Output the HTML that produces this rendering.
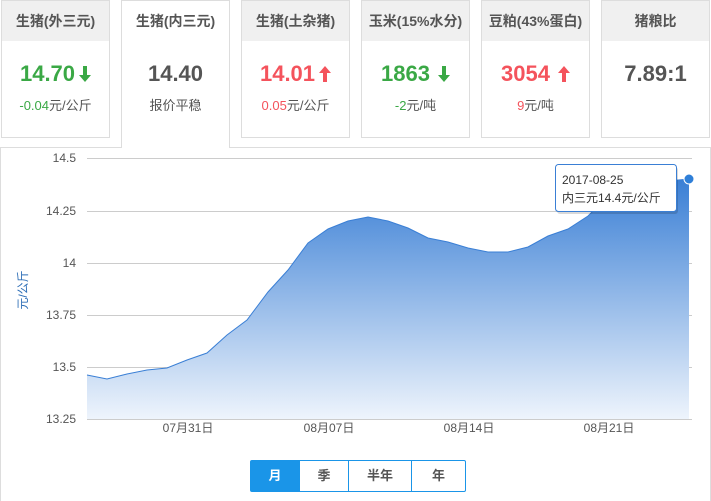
<!DOCTYPE html>
<html><head><meta charset="utf-8"><style>
body{margin:0;width:711px;height:501px;background:#fff;font-family:"Liberation Sans","Noto Sans CJK SC",sans-serif;position:relative;overflow:hidden}
.c{position:absolute;top:0;width:107px;height:136px;border:1px solid #ddd;background:#fff;text-align:center}
.c .h{height:40px;background:#f0f0f0;line-height:40px;font-size:14px;font-weight:bold;color:#555}
.c .v{margin-top:18px;font-size:22px;font-weight:bold;line-height:30px}
.c .s{font-size:13px;color:#555;margin-top:6px}
.g{color:#3aa845}.r{color:#f4535c}.k{color:#555}
.sel{height:147px;border-bottom:none;z-index:2}
.sel .h{background:#fff}
.panel{position:absolute;left:0;top:147px;width:709px;height:353px;border:1px solid #ddd;border-bottom:none}
.btns{position:absolute;left:250px;top:460px;height:30px;border:1px solid #1a95e8;display:flex;font-size:13px;font-weight:bold;color:#555;border-radius:2px}
.btns div{line-height:30px;text-align:center;border-left:1px solid #1a95e8}
.btns div:first-child{border-left:none;background:#1a95e8;color:#fff}
svg.a{vertical-align:-1px;margin-left:4px}
</style></head><body>
<div class="panel"></div>
<div class="c" style="left:1px"><div class="h">生猪(外三元)</div><div class="v g">14.70<svg class="a" width="12" height="16" viewBox="0 0 12 16"><path d="M4 0H8V9H12L6 16L0 9H4Z" fill="#3aa845"/></svg></div><div class="s"><span class="g">-0.04</span>元/公斤</div></div>
<div class="c sel" style="left:121px"><div class="h">生猪(内三元)</div><div class="v k">14.40</div><div class="s">报价平稳</div></div>
<div class="c" style="left:241px"><div class="h">生猪(土杂猪)</div><div class="v r">14.01<svg class="a" width="12" height="16" viewBox="0 0 12 16"><path d="M4 16H8V7H12L6 0L0 7H4Z" fill="#f4535c"/></svg></div><div class="s"><span class="r">0.05</span>元/公斤</div></div>
<div class="c" style="left:361px"><div class="h">玉米(15%水分)</div><div class="v g">1863<svg class="a" style="margin-left:8px" width="12" height="16" viewBox="0 0 12 16"><path d="M4 0H8V9H12L6 16L0 9H4Z" fill="#3aa845"/></svg></div><div class="s"><span class="g">-2</span>元/吨</div></div>
<div class="c" style="left:481px"><div class="h">豆粕(43%蛋白)</div><div class="v r">3054<svg class="a" style="margin-left:8px" width="12" height="16" viewBox="0 0 12 16"><path d="M4 16H8V7H12L6 0L0 7H4Z" fill="#f4535c"/></svg></div><div class="s"><span class="r">9</span>元/吨</div></div>
<div class="c" style="left:601px"><div class="h">猪粮比</div><div class="v k">7.89:1</div></div>
<svg style="position:absolute;left:0;top:0" width="711" height="501">
<defs><linearGradient id="gr" x1="0" y1="0" x2="0" y2="1"><stop offset="0" stop-color="#3a7fd5"/><stop offset="1" stop-color="#eef4fc"/></linearGradient></defs>
<g stroke="#ccc" stroke-width="1">
<line x1="87" y1="158.5" x2="692" y2="158.5"/><line x1="87" y1="211.5" x2="692" y2="211.5"/><line x1="87" y1="263.5" x2="692" y2="263.5"/><line x1="87" y1="315.5" x2="692" y2="315.5"/><line x1="87" y1="367.5" x2="692" y2="367.5"/><line x1="87" y1="419.5" x2="692" y2="419.5"/>
</g>
<path d="M87,375 L107,379 127,374 147,370 167,368 187,360 207,353 227,335 247,320 268,292 288,270 308,243 328,229 348,221 368,217 388,221 408,228 428,238 448,242 468,248 488,252 508,252 528,247 548,236 568,229 588,216 608,196 628,188 648,184 668,181 689,179 L689,419 L87,419Z" fill="url(#gr)"/>
<path d="M87,375 L107,379 127,374 147,370 167,368 187,360 207,353 227,335 247,320 268,292 288,270 308,243 328,229 348,221 368,217 388,221 408,228 428,238 448,242 468,248 488,252 508,252 528,247 548,236 568,229 588,216 608,196 628,188 648,184 668,181 689,179" fill="none" stroke="#3a7fd5" stroke-width="1"/>
<circle cx="689" cy="179" r="5" fill="#2f7fd8" stroke="#fff" stroke-width="1"/>
<g font-size="12" fill="#555" text-anchor="end">
<text x="76" y="162">14.5</text><text x="76" y="215">14.25</text><text x="76" y="267">14</text><text x="76" y="319">13.75</text><text x="76" y="371">13.5</text><text x="76" y="423">13.25</text></g>
<g font-size="12" fill="#555" text-anchor="middle">
<text x="188" y="432">07月31日</text><text x="329" y="432">08月07日</text><text x="469" y="432">08月14日</text><text x="609" y="432">08月21日</text></g>
<text transform="translate(27,290) rotate(-90)" font-size="12" fill="#2f6fb7" text-anchor="middle">元/公斤</text>
<rect x="557" y="167" width="121" height="47" rx="3" fill="#000" opacity="0.15"/>
<rect x="555.5" y="164.5" width="121" height="47" rx="3" fill="#fff" stroke="#3a7fd5"/>
<text x="562" y="184" font-size="12" fill="#333">2017-08-25</text>
<text x="562" y="202" font-size="12" fill="#333">内三元14.4元/公斤</text>
</svg>
<div class="btns"><div style="width:48px">月</div><div style="width:48px">季</div><div style="width:62px">半年</div><div style="width:53px">年</div></div>
</body></html>
